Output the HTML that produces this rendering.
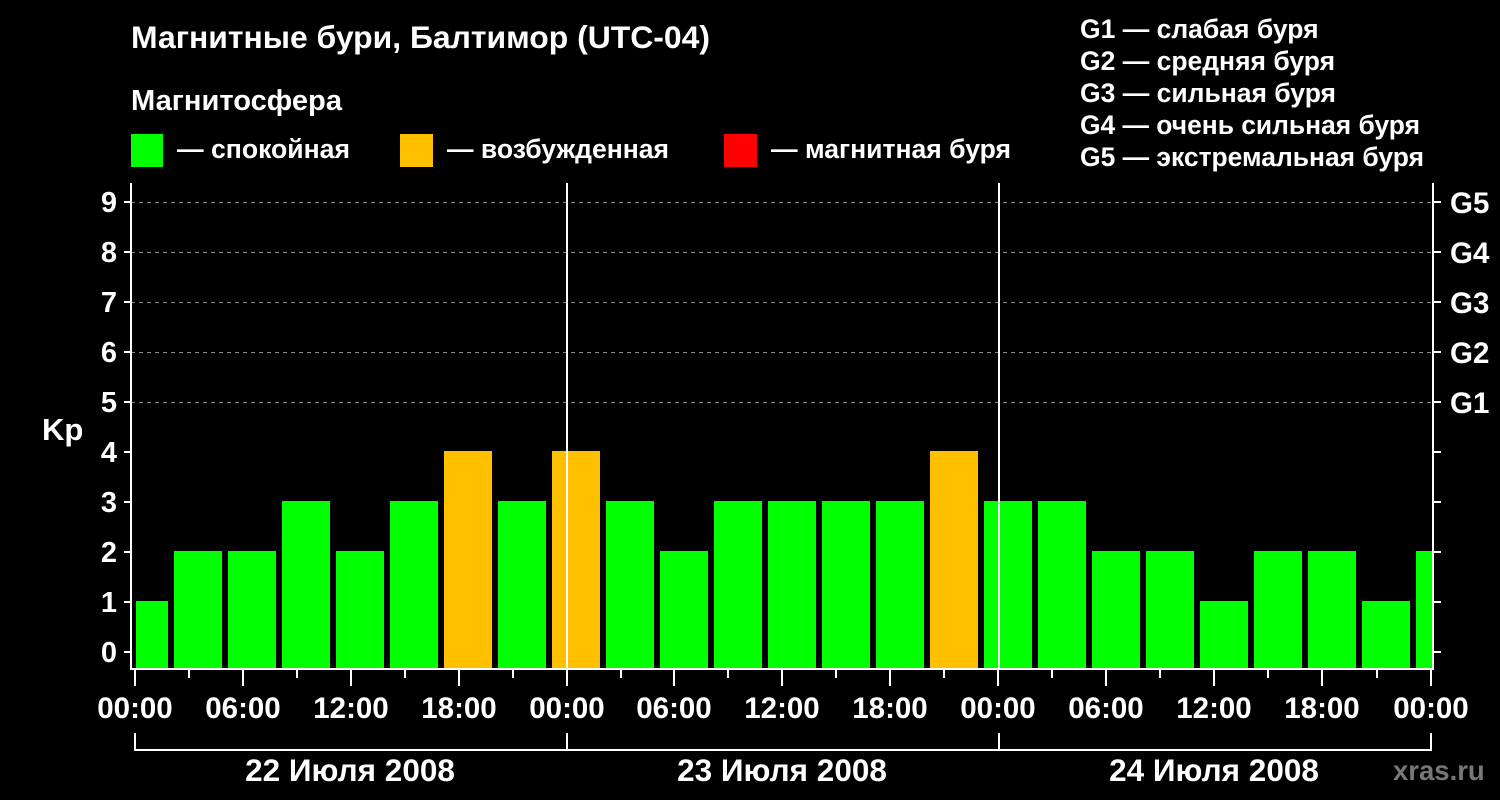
<!DOCTYPE html>
<html><head><meta charset="utf-8"><style>
html,body{margin:0;padding:0;background:#000;width:1500px;height:800px;overflow:hidden}
svg{display:block}
text{font-family:"Liberation Sans",sans-serif;font-weight:bold;fill:#fff}
</style></head><body>
<svg width="1500" height="800" viewBox="0 0 1500 800">
<text x="131" y="48" font-size="31.5" textLength="579" lengthAdjust="spacingAndGlyphs">Магнитные бури, Балтимор (UTC-04)</text>
<text x="131" y="110" font-size="29" textLength="211" lengthAdjust="spacingAndGlyphs">Магнитосфера</text>
<rect x="131" y="134" width="32" height="33" fill="#00ff00"/>
<text x="177" y="158" font-size="26.5" textLength="173" lengthAdjust="spacingAndGlyphs">— спокойная</text>
<rect x="400" y="134" width="33" height="33" fill="#ffc000"/>
<text x="447" y="158" font-size="26.5" textLength="222" lengthAdjust="spacingAndGlyphs">— возбужденная</text>
<rect x="724" y="134" width="33" height="33" fill="#ff0000"/>
<text x="771" y="158" font-size="26.5" textLength="240" lengthAdjust="spacingAndGlyphs">— магнитная буря</text>
<g font-size="26.5">
<text x="1080" y="38">G1 — слабая буря</text>
<text x="1080" y="70">G2 — средняя буря</text>
<text x="1080" y="102">G3 — сильная буря</text>
<text x="1080" y="134" textLength="340" lengthAdjust="spacingAndGlyphs">G4 — очень сильная буря</text>
<text x="1080" y="166" textLength="344" lengthAdjust="spacingAndGlyphs">G5 — экстремальная буря</text>
</g>
<g stroke="#888" stroke-dasharray="4,4" stroke-width="1">
<line x1="131" y1="202.5" x2="1433" y2="202.5"/>
<line x1="131" y1="252.5" x2="1433" y2="252.5"/>
<line x1="131" y1="302.5" x2="1433" y2="302.5"/>
<line x1="131" y1="352.5" x2="1433" y2="352.5"/>
<line x1="131" y1="402.5" x2="1433" y2="402.5"/>
</g>
<g fill="#00ff00">
<rect x="136" y="601" width="32" height="67"/>
<rect x="174" y="551" width="48" height="117"/>
<rect x="228" y="551" width="48" height="117"/>
<rect x="282" y="501" width="48" height="167"/>
<rect x="336" y="551" width="48" height="117"/>
<rect x="390" y="501" width="48" height="167"/>
<rect x="498" y="501" width="48" height="167"/>
<rect x="606" y="501" width="48" height="167"/>
<rect x="660" y="551" width="48" height="117"/>
<rect x="714" y="501" width="48" height="167"/>
<rect x="768" y="501" width="48" height="167"/>
<rect x="822" y="501" width="48" height="167"/>
<rect x="876" y="501" width="48" height="167"/>
<rect x="984" y="501" width="48" height="167"/>
<rect x="1038" y="501" width="48" height="167"/>
<rect x="1092" y="551" width="48" height="117"/>
<rect x="1146" y="551" width="48" height="117"/>
<rect x="1200" y="601" width="48" height="67"/>
<rect x="1254" y="551" width="48" height="117"/>
<rect x="1308" y="551" width="48" height="117"/>
<rect x="1362" y="601" width="48" height="67"/>
<rect x="1416" y="551" width="16" height="117"/>
</g>
<g fill="#ffc000">
<rect x="444" y="451" width="48" height="217"/>
<rect x="552" y="451" width="48" height="217"/>
<rect x="930" y="451" width="48" height="217"/>
</g>
<g stroke="#fff" stroke-width="2" fill="none">
<polyline points="131,183 131,669 1433,669 1433,183"/>
<line x1="567" y1="183" x2="567" y2="668"/>
<line x1="999" y1="183" x2="999" y2="668"/>
<path d="M124 202H131M124 252H131M124 302H131M124 352H131M124 402H131M124 452H131M124 502H131M124 552H131M124 602H131M124 652H131"/>
<path d="M1433 202H1441M1433 252H1441M1433 302H1441M1433 352H1441M1433 402H1441M1433 452H1441M1433 502H1441M1433 552H1441M1433 602H1441M1433 652H1441"/>
<path d="M135 669V686M243 669V686M351 669V686M459 669V686M567 669V686M674 669V686M782 669V686M890 669V686M998 669V686M1106 669V686M1214 669V686M1322 669V686M1431 669V686"/>
<path d="M189 669V678M297 669V678M405 669V678M513 669V678M621 669V678M728 669V678M836 669V678M944 669V678M1052 669V678M1160 669V678M1268 669V678M1377 669V678"/>
<path d="M135 733V750H1431V733M567 733V750M999 733V750"/>
</g>
<g font-size="29" text-anchor="end">
<text x="117" y="212">9</text><text x="117" y="262">8</text><text x="117" y="312">7</text>
<text x="117" y="362">6</text><text x="117" y="412">5</text><text x="117" y="462">4</text>
<text x="117" y="512">3</text><text x="117" y="562">2</text><text x="117" y="612">1</text>
<text x="117" y="662">0</text>
</g>
<text x="42" y="440" font-size="31">Kp</text>
<g font-size="29.5">
<text x="1450" y="213">G5</text><text x="1450" y="263">G4</text><text x="1450" y="313">G3</text>
<text x="1450" y="363">G2</text><text x="1450" y="413">G1</text>
</g>
<g font-size="29.5" text-anchor="middle">
<text x="135" y="718">00:00</text><text x="243" y="718">06:00</text><text x="351" y="718">12:00</text>
<text x="459" y="718">18:00</text><text x="567" y="718">00:00</text><text x="674" y="718">06:00</text>
<text x="782" y="718">12:00</text><text x="890" y="718">18:00</text><text x="998" y="718">00:00</text>
<text x="1106" y="718">06:00</text><text x="1214" y="718">12:00</text><text x="1322" y="718">18:00</text>
<text x="1431" y="718">00:00</text>
</g>
<g font-size="31.5" text-anchor="middle">
<text x="350" y="781">22 Июля 2008</text>
<text x="782" y="781">23 Июля 2008</text>
<text x="1214" y="781">24 Июля 2008</text>
</g>
<text x="1393" y="780" font-size="27.5" style="fill:#777">xras.ru</text>
</svg>
</body></html>
